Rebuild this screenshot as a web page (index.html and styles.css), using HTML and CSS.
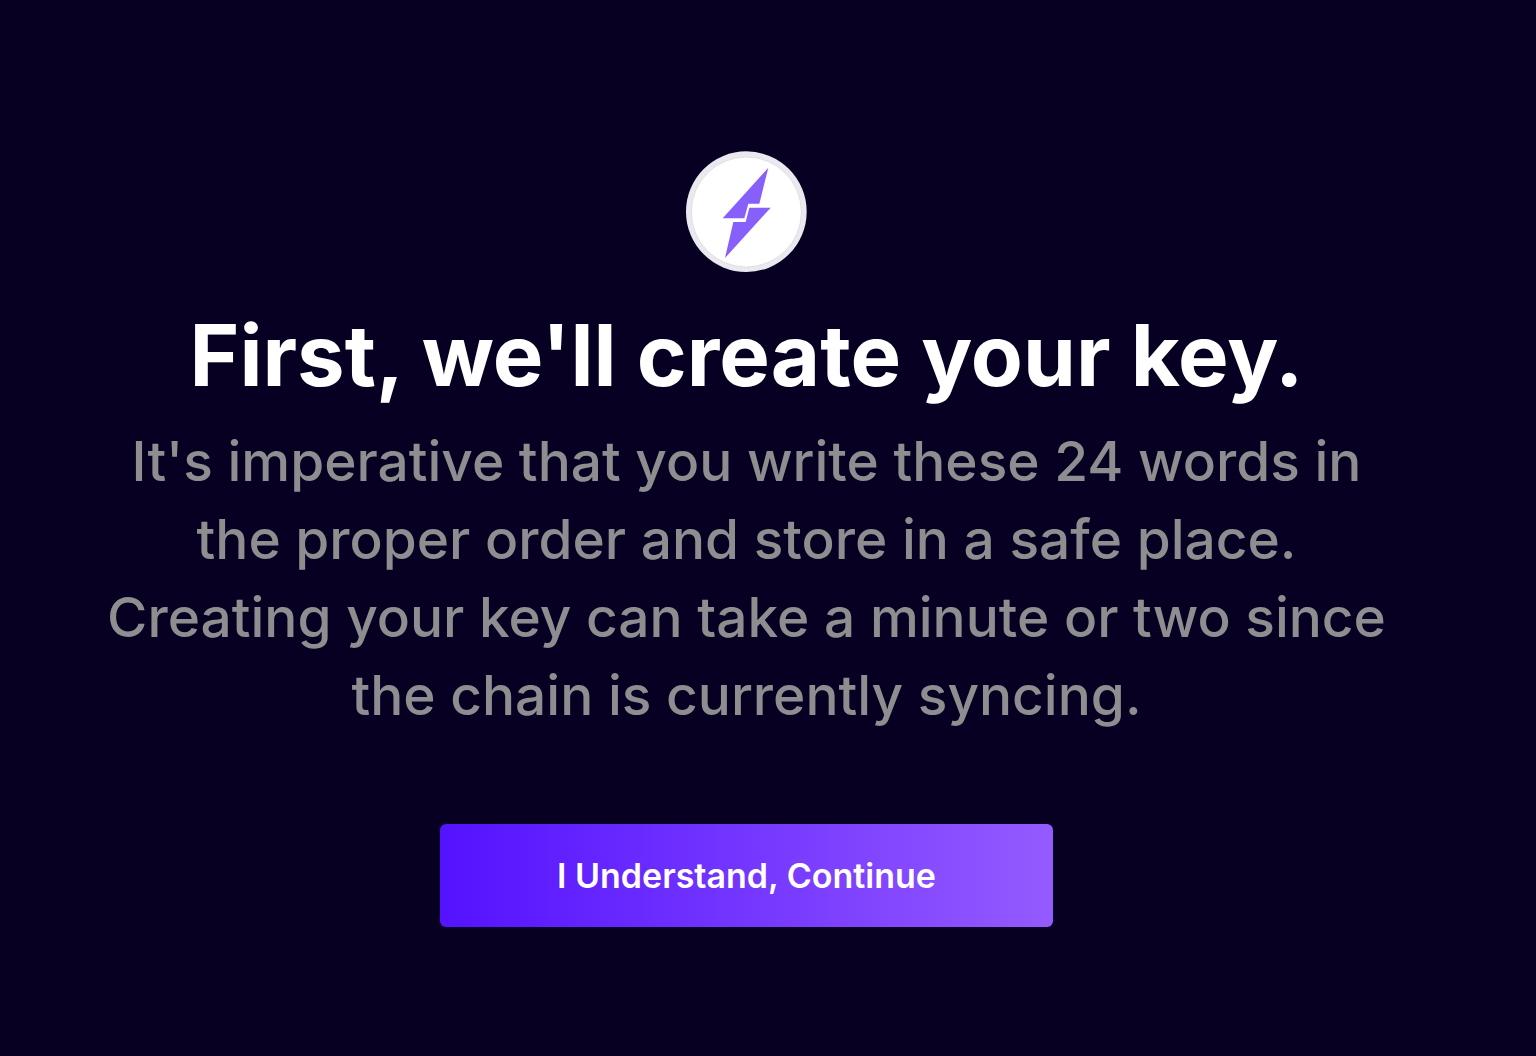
FILE: index.html
```
<!DOCTYPE html>
<html lang="en">
<head>
    <meta charset="UTF-8">
    <meta name="viewport" content="width=device-width, initial-scale=1.0">
    <title>Create your key</title>
    <link rel="stylesheet" href="styles.css">
</head>
<body>
    <main class="onboarding">
        <svg class="logo" viewBox="0 0 363 363" role="img" aria-label="Logo">
            <circle cx="181" cy="182" r="181" fill="#eae9ef"/>
            <circle cx="181" cy="183" r="165" fill="#fff" stroke="#d4d3d6" stroke-width="2"/>
            <path fill="#875ffb" d="M247 50L220 158H187L175 202H110Z"/>
            <path fill="#875ffb" d="M190 170H254L117 321L142 213H179Z"/>
        </svg>
        <h1>First, we'll create your key.</h1>
        <p class="description">It's imperative that you write these 24 words in the proper order and store in a safe place. Creating your key can take a minute or two since the chain is currently syncing.</p>
        <button class="continue" type="button">I Understand, Continue</button>
    </main>
</body>
</html>
```
FILE: styles.css
```
*{
    box-sizing:border-box;
}

body{
    margin:0;
    background:#070022;
    color:white;
    font-family:Inter, "Liberation Sans", sans-serif;
}

.onboarding
{
    display:flex;
    flex-direction:column;
    align-items:center;
    padding:151px 86px 128px 43px;
    text-align:center;
}

.logo
{
    width:121px;
    height:121px;
}

h1{
    margin:32px 0 0;
    font-size:85px;
    font-weight:700;
    line-height:104px;
}

.description
{
    max-width:1300px;
    margin:14px 0 0;
    color:#8e8d90;
    font-size:55px;
    font-weight:500;
    line-height:78px;
}

.continue
{
    margin-top:90px;
    padding:30px 117px;
    border:0;
    border-radius:6px;
    background:linear-gradient(90deg,#5412ff,#945bff);
    color:white;
    font-family:inherit;
    font-size:34px;
    font-weight:600;
    line-height:43px;
    cursor:pointer;
}
```
